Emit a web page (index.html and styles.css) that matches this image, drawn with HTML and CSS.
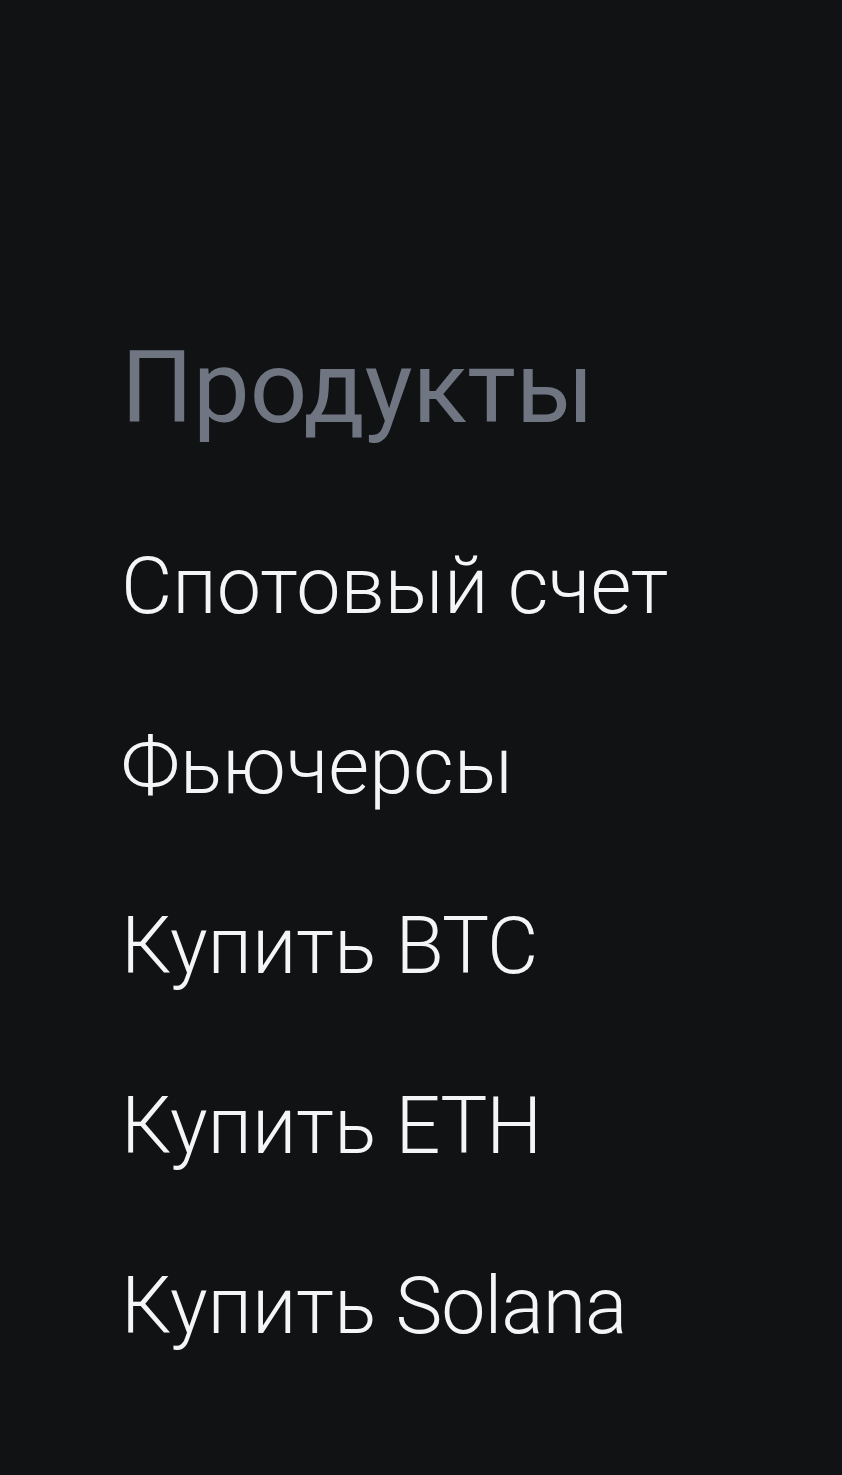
FILE: index.html
```html
<!DOCTYPE html>
<html lang="ru">
<head>
<meta charset="utf-8">
<title>Продукты</title>
<link rel="stylesheet" href="styles.css">
</head>
<body>
<nav class="menu">
  <h2 class="menu-title">Продукты</h2>
  <ul class="menu-list">
    <li class="menu-item">Спотовый счет</li>
    <li class="menu-item">Фьючерсы</li>
    <li class="menu-item">Купить <span class="lat">BTC</span></li>
    <li class="menu-item">Купить <span class="lat">ETH</span></li>
    <li class="menu-item">Купить <span class="lat">Solana</span></li>
  </ul>
</nav>
</body>
</html>
```
FILE: styles.css
```css
html, body {
  margin: 0;
  padding: 0;
  background: #111214;
}
body {
  width: 842px;
  height: 1475px;
  overflow: hidden;
  font-family: Roboto, "Noto Sans", sans-serif;
}
.menu {
  padding: 327px 0 0 121px;
  display: flex;
  flex-direction: column;
}
.menu-title {
  margin: 0;
  font-size: 101px;
  line-height: 122px;
  font-weight: 400;
  color: #6f7682;
}
.menu-list {
  list-style: none;
  margin: 47px 0 0;
  padding: 0;
  display: flex;
  flex-direction: column;
}
.menu-item {
  font-size: 79px;
  line-height: 180px;
  font-weight: 300;
  color: #f4f5f7;
  white-space: nowrap;
}
.lat {
  font-family: Roboto, sans-serif;
  letter-spacing: -1px;
}
```
